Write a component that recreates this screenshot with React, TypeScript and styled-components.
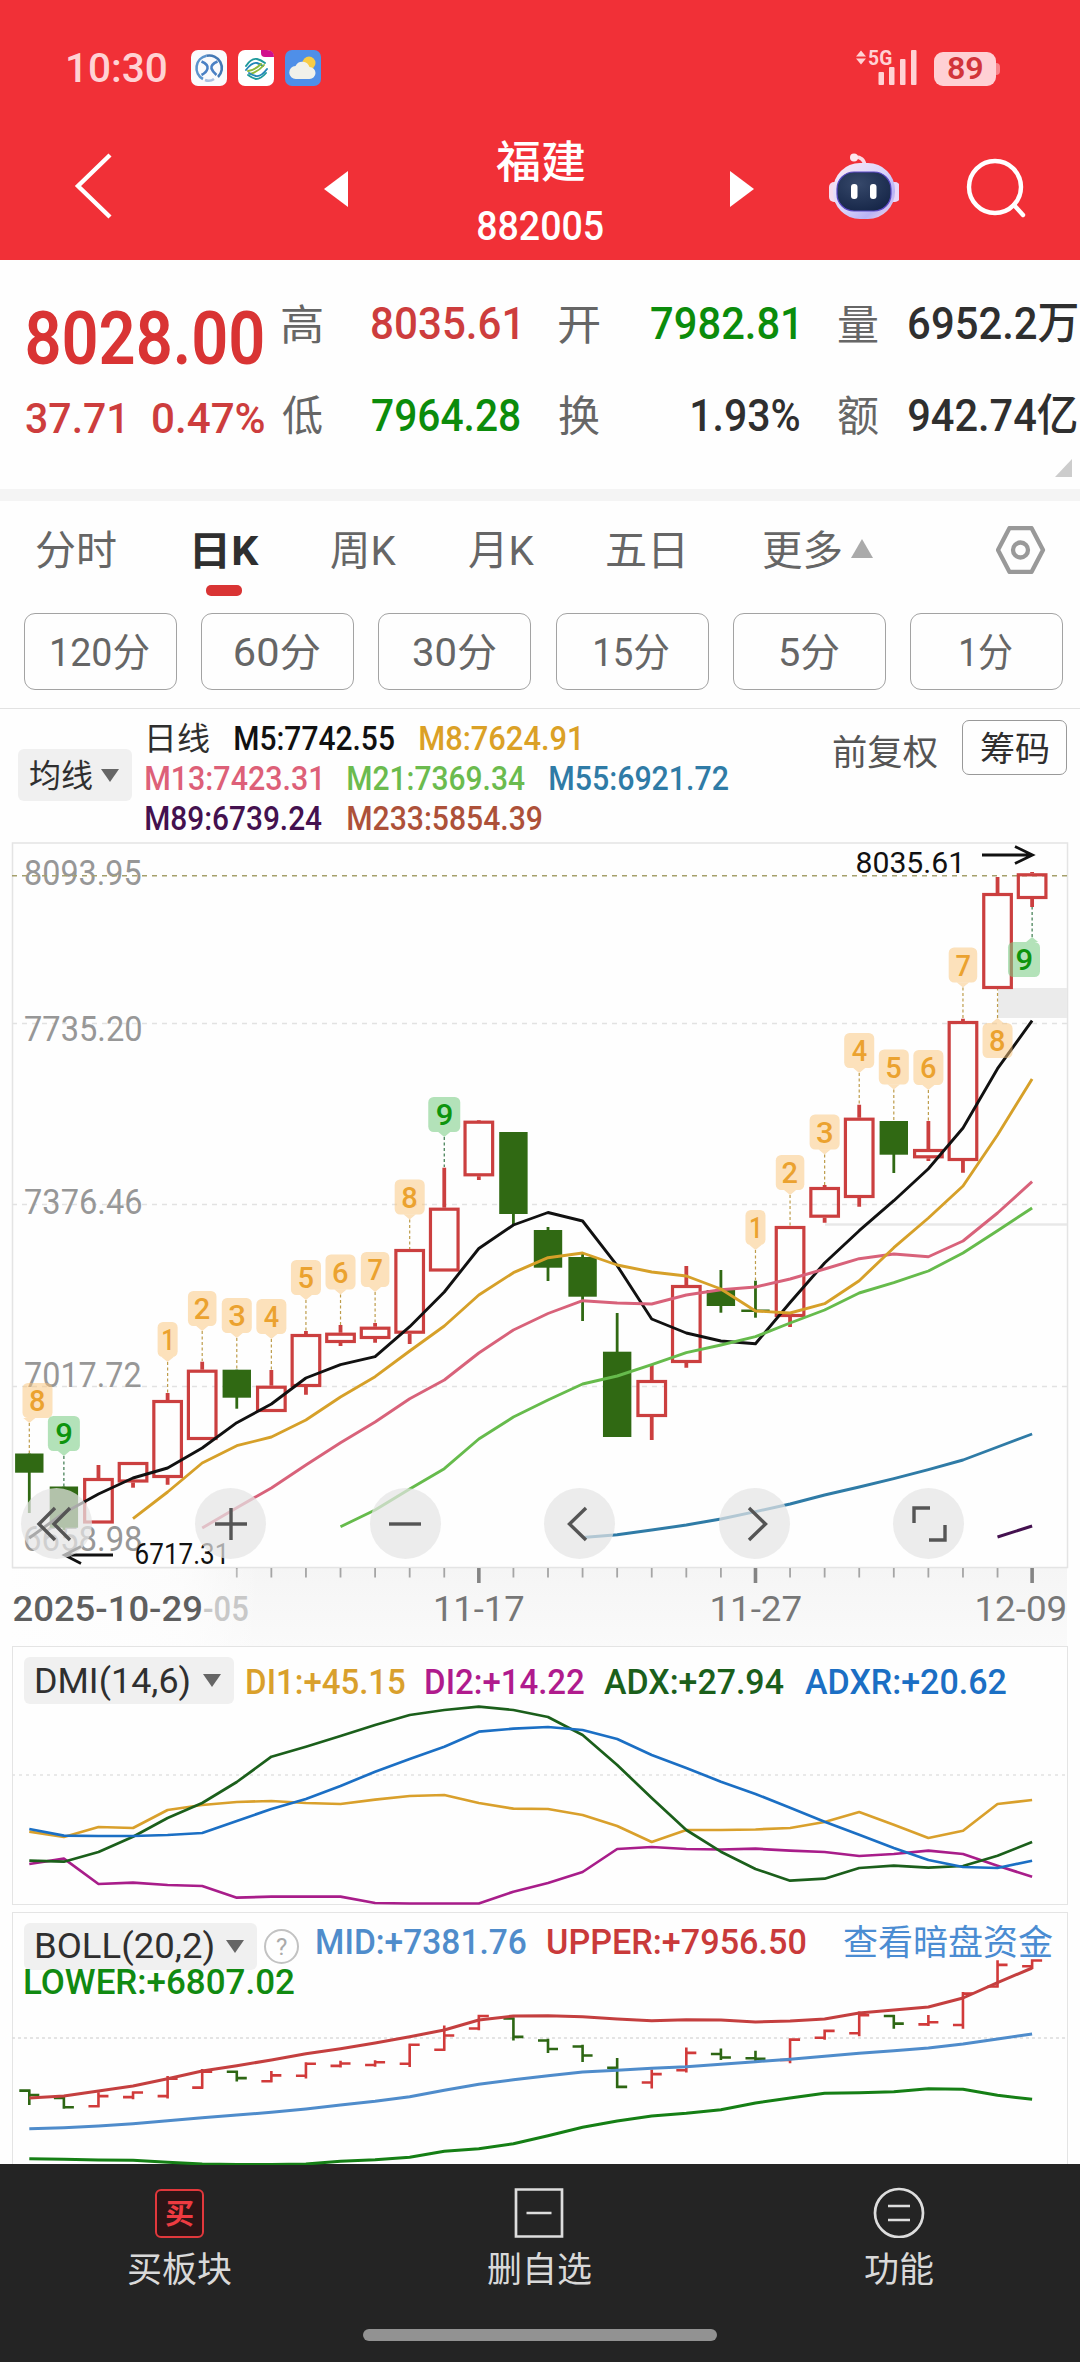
import React from "react";
import styled, { createGlobalStyle } from "styled-components";

const FAMILY = 'Roboto, "Noto Sans CJK SC", sans-serif';

const Global = createGlobalStyle`
  * { box-sizing: border-box; }
  body { margin: 0; background: #fff; font-family: ${FAMILY}; }
`;

/* ---------- text fitted to a given ink width ---------- */

let ctx: CanvasRenderingContext2D | null = null;
function fit(text: string, size: number, weight: number, width: number) {
  if (!ctx) ctx = document.createElement("canvas").getContext("2d");
  if (!ctx) return { scale: 1, shift: 0 };
  ctx.font = `${weight} ${size}px ${FAMILY}`;
  const m = ctx.measureText(text);
  const scale = width / (m.actualBoundingBoxLeft + m.actualBoundingBoxRight);
  return { scale, shift: m.actualBoundingBoxLeft * scale };
}

const FitBox = styled.span<{ $w: number; $ml: number; $size: number; $weight: number; $color: string }>`
  display: block;
  flex: none;
  width: ${(p) => p.$w}px;
  margin-left: ${(p) => p.$ml}px;
  font-size: ${(p) => p.$size}px;
  font-weight: ${(p) => p.$weight};
  line-height: 1.1;
  color: ${(p) => p.$color};
  white-space: nowrap;
`;
const FitInner = styled.span`
  display: inline-block;
  transform-origin: 0 50%;
`;

type FitProps = { w: number; size: number; color: string; weight?: number; ml?: number; children: string };
function Fit({ w, size, color, weight = 400, ml = 0, children }: FitProps) {
  const f = fit(children, size, weight, w);
  const drop = /^[\u4e00-\u9fff]+K?$/.test(children) ? 2.2 : 1.2;
  return (
    <FitBox $w={w} $ml={ml} $size={size} $weight={weight} $color={color}>
      <FitInner style={{ transform: `translate(${f.shift}px, ${drop}px) scaleX(${f.scale})` }}>{children}</FitInner>
    </FitBox>
  );
}

type ChartTextProps = { x: number; cy: number; w: number; size: number; color: string; weight?: number; children: string };
function ChartText({ x, cy, w, size, color, weight = 400, children }: ChartTextProps) {
  const f = fit(children, size, weight, w);
  return (
    <text
      transform={`translate(${x + f.shift} ${cy + size * 0.355}) scale(${f.scale} 1)`}
      fontFamily={FAMILY}
      fontSize={size}
      fontWeight={weight}
      fill={color}
    >
      {children}
    </text>
  );
}

/* ---------- header ---------- */

const Page = styled.main`
  width: 1080px;
  height: 2362px;
  display: flex;
  flex-direction: column;
  background: #fefefe;
  overflow: hidden;
`;
const Header = styled.header`
  flex: none;
  height: 260px;
  background: #f13037;
`;
const StatusBar = styled.div`
  height: 112px;
  padding: 23px 84px 0 68px;
  display: flex;
  align-items: center;
`;
const AppIcons = styled.div`
  display: flex;
  gap: 11px;
  margin-left: 25px;
`;
const Signal = styled.svg`
  margin-left: auto;
  overflow: visible;
`;
const Battery = styled.div`
  position: relative;
  width: 62px;
  height: 34px;
  margin: 2px 0 0 17px;
  border-radius: 9px;
  background: #ffd0d4;
  display: flex;
  align-items: center;
  justify-content: center;
  &::after {
    content: "";
    position: absolute;
    right: -4px;
    top: 11px;
    width: 4px;
    height: 12px;
    border-radius: 0 4px 4px 0;
    background: #f8868c;
  }
`;
const Nav = styled.nav`
  height: 148px;
  display: flex;
  align-items: center;
  & > * { flex: none; }
`;
const Back = styled.svg`margin-left: 74px;`;
const Prev = styled.svg`margin: 6px 0 0 212px;`;
const Title = styled.div`
  width: 126px;
  margin: 14px 0 0 129px;
  display: flex;
  flex-direction: column;
`;
const TitleLine = styled.div`
  height: 64.5px;
  display: flex;
  align-items: center;
  justify-content: center;
`;
const Next = styled.svg`margin: 6px 0 0 127px;`;
const Robot = styled.svg`margin-left: 75px;`;
const Search = styled.svg`margin-left: 65px;`;

function AppOne() {
  return (
    <svg width="36" height="36" viewBox="0 0 36 36">
      <rect width="36" height="36" rx="7" fill="#fafafc" />
      <g fill="none" stroke="#4a84c0" strokeWidth="2.600">
        <path d="M15.500 5.800A12.500 12.500 0 0 0 12 29" stroke="#5c93cc" />
        <path d="M15.500 5.800A12.500 12.500 0 0 1 27 27" stroke="#4478b4" />
        <path d="M14 30q5 2 9-1" stroke="#a9bfe0" />
        <path d="M10.500 11.500q7 3 6 7-1 4-6 6.500M26.500 11.500q-7 3-6 7 1 3 5 6.500" stroke="#4a80c4" />
      </g>
    </svg>
  );
}
function AppTwo() {
  return (
    <svg width="36" height="36" viewBox="0 0 36 36">
      <rect width="36" height="36" rx="7" fill="#fff" />
      <path d="M23 0h6q7 0 7 7H27q-4 0-4-4z" fill="#d1108c" />
      <g fill="none" strokeWidth="1.900" strokeLinecap="round">
        <path d="M8 16q5-8 11-7 4 1 8 4" stroke="#1f9a9c" />
        <path d="M8 20q6-8 11-7 3 1 6 3" stroke="#2386b8" />
        <path d="M12 24q8-2 14-9" stroke="#8cb93a" />
        <path d="M10 21q7-1 13-7" stroke="#8cb93a" />
        <path d="M29 19q-6 8-11 7-4-1-7-3" stroke="#2386b8" />
        <path d="M28 23q-5 6-10 6-4-1-8-4" stroke="#1f9a9c" />
      </g>
    </svg>
  );
}
function AppThree() {
  return (
    <svg width="36" height="36" viewBox="0 0 36 36">
      <rect width="36" height="36" rx="7" fill="#4f8fe8" />
      <circle cx="24" cy="13" r="6.500" fill="#f8cc45" />
      <path d="M11 29a6.500 6.500 0 0 1-.5-13 7.500 7.500 0 0 1 14 1 6 6 0 0 1 0 12z" fill="#f1f1ea" />
    </svg>
  );
}

function HeaderView() {
  return (
    <Header>
      <StatusBar>
        <Fit w={98} size={40} weight={500} color="#ffd2d4">10:30</Fit>
        <AppIcons>
          <AppOne />
          <AppTwo />
          <AppThree />
        </AppIcons>
        <Signal width="61" height="36" viewBox="856 50 61 36" fill="#ffd2d4">
          <path d="M856 56.500l5-6 5 6zM856 58.500l5 6 5-6z" />
          <ChartText x={869} cy={57.500} w={23} size={21} weight={700} color="#ffd2d4">5G</ChartText>
          <rect x="878.500" y="72" width="5.500" height="13" rx="1" />
          <rect x="889" y="67" width="5.500" height="18" rx="1" />
          <rect x="900" y="59" width="5.500" height="26" rx="1" />
          <rect x="911" y="50" width="5.500" height="35" rx="1" />
        </Signal>
        <Battery>
          <Fit w={35} size={31} weight={600} color="#d2343a">89</Fit>
        </Battery>
      </StatusBar>
      <Nav>
        <Back width="38" height="66" viewBox="0 0 38 66" fill="none" stroke="#fff" strokeWidth="4.400">
          <path d="M36 2L4 33l32 31" />
        </Back>
        <Prev width="24" height="36" viewBox="0 0 24 36" fill="#fff">
          <path d="M24 0v36L0 18z" />
        </Prev>
        <Title>
          <TitleLine><Fit w={89} size={44} weight={500} color="#fff">福建</Fit></TitleLine>
          <TitleLine><Fit w={125} size={41} color="#fff" weight={500}>882005</Fit></TitleLine>
        </Title>
        <Next width="24" height="36" viewBox="0 0 24 36" fill="#fff">
          <path d="M0 0v36l24-18z" />
        </Next>
        <Robot width="70" height="66" viewBox="0 0 70 66">
          <defs>
            <linearGradient id="shell" x1="0" y1="0" x2="1" y2="1">
              <stop offset="0" stopColor="#fdeaf4" />
              <stop offset=".5" stopColor="#d9d5fb" />
              <stop offset=".75" stopColor="#b9b3f6" />
              <stop offset="1" stopColor="#fbdfe8" />
            </linearGradient>
            <radialGradient id="visor" cx=".4" cy=".3" r=".8">
              <stop offset="0" stopColor="#36486a" />
              <stop offset="1" stopColor="#142446" />
            </radialGradient>
          </defs>
          <path d="M25 4q10-1 11 9" fill="none" stroke="#fcd9e4" strokeWidth="3.500" />
          <circle cx="25" cy="4.500" r="4" fill="#fde6ee" />
          <rect x="0" y="29" width="12" height="20" rx="5" fill="#f6dcee" />
          <rect x="59" y="29" width="12" height="20" rx="5" fill="#e8d8f8" />
          <rect x="4" y="10" width="62" height="56" rx="27" fill="url(#shell)" />
          <rect x="8" y="19" width="54" height="39" rx="17" fill="url(#visor)" stroke="#5b49c6" strokeWidth="1.200" />
          <rect x="22" y="31" width="6.500" height="15" rx="3" fill="#fff" />
          <rect x="41" y="31" width="6.500" height="15" rx="3" fill="#fff" />
        </Robot>
        <Search width="64" height="64" viewBox="0 0 64 64" fill="none" stroke="#fff" strokeWidth="4.400" strokeLinecap="round">
          <circle cx="31" cy="33" r="26" />
          <path d="M50 51l9 10" />
        </Search>
      </Nav>
    </Header>
  );
}

/* ---------- quote ---------- */

const RED = "#d93434";
const GREEN = "#0b8c0b";
const INK = "#2f2f2f";
const MUTED = "#666";

const Quote = styled.section`
  position: relative;
  flex: none;
  height: 229px;
  padding: 18px 0 0 26px;
  display: flex;
`;
const PriceCol = styled.div`width: 238px;`;
const PairCol = styled.div<{ $w: number; $ml: number }>`
  flex: none;
  width: ${(p) => p.$w}px;
  margin-left: ${(p) => p.$ml}px;
`;
const Line = styled.div<{ $h: number }>`
  height: ${(p) => p.$h}px;
  display: flex;
  align-items: center;
`;
const Corner = styled.svg`
  position: absolute;
  right: 8px;
  bottom: 12px;
`;
const Divider = styled.div`
  flex: none;
  height: 12px;
  background: #f4f4f4;
`;

type PairData = { label: string; value: string; gap: number; w: number; color: string };
const PAIRS: { w: number; ml: number; rows: PairData[] }[] = [
  { w: 239, ml: 18, rows: [
    { label: "高", value: "8035.61", gap: 50, w: 145.5, color: "#cd3d3d" },
    { label: "低", value: "7964.28", gap: 50, w: 148, color: GREEN } ] },
  { w: 239, ml: 38, rows: [
    { label: "开", value: "7982.81", gap: 52, w: 145, color: GREEN },
    { label: "换", value: "1.93%", gap: 93, w: 107, color: INK } ] },
  { w: 240, ml: 40, rows: [
    { label: "量", value: "6952.2万", gap: 31, w: 168, color: INK },
    { label: "额", value: "942.74亿", gap: 31, w: 168, color: INK } ] },
];

function QuoteView() {
  return (
    <Quote>
      <PriceCol>
        <Line $h={118}><Fit w={236} ml={1} size={75} weight={600} color={RED}>8028.00</Fit></Line>
        <Line $h={43}>
          <Fit w={96.5} size={43} weight={500} color="#cd3d3d">37.71</Fit>
          <Fit w={111} ml={30.5} size={43} weight={500} color="#cd3d3d">0.47%</Fit>
        </Line>
      </PriceCol>
      {PAIRS.map((c, i) => (
        <PairCol key={i} $w={c.w} $ml={c.ml}>
          {c.rows.map((r) => (
            <Line key={r.label} $h={91.5}>
              <Fit w={40} size={42} color={MUTED}>{r.label}</Fit>
              <Fit w={r.w} ml={r.gap} size={44.5} weight={500} color={r.color}>{r.value}</Fit>
            </Line>
          ))}
        </PairCol>
      ))}
      <Corner width="17" height="18" viewBox="0 0 17 18"><path d="M17 0v18H0z" fill="#ccc" /></Corner>
    </Quote>
  );
}

/* ---------- period tabs ---------- */

const Tabs = styled.div`
  flex: none;
  height: 112px;
  display: flex;
  padding-top: 24px;
`;
const Tab = styled.div<{ $ml: number }>`
  position: relative;
  flex: none;
  height: 50px;
  margin-left: ${(p) => p.$ml}px;
  display: flex;
  align-items: center;
`;
const Underline = styled.i`
  position: absolute;
  left: 11px;
  top: 60px;
  width: 36px;
  height: 11px;
  border-radius: 5px;
  background: ${RED};
`;
const UpArrow = styled.svg`margin: -4px 0 0 10px;`;
const Minutes = styled.div`
  flex: none;
  height: 96px;
  padding: 0 17px 0 24px;
  display: grid;
  grid-template-columns: repeat(6, 153px);
  justify-content: space-between;
  align-items: start;
  border-bottom: 1px solid #e2e2e2;
`;
const MinuteButton = styled.div`
  height: 77px;
  padding-top: 2px;
  border: 1.5px solid #a3a3a3;
  border-radius: 11px;
  display: flex;
  align-items: center;
  justify-content: center;
`;

const MINUTES: [string, number][] = [["120分", 97], ["60分", 85], ["30分", 83], ["15分", 74], ["5分", 59], ["1分", 51]];

function PeriodView() {
  return (
    <>
      <Tabs>
        <Tab $ml={36}><Fit w={80} size={41} color={MUTED}>分时</Fit></Tab>
        <Tab $ml={79}><Fit w={64} size={40} weight={700} color={INK}>日K</Fit><Underline /></Tab>
        <Tab $ml={72}><Fit w={65} size={41} color={MUTED}>周K</Fit></Tab>
        <Tab $ml={73}><Fit w={65} size={41} color={MUTED}>月K</Fit></Tab>
        <Tab $ml={73}><Fit w={76} size={41} color={MUTED}>五日</Fit></Tab>
        <Tab $ml={80}>
          <Fit w={78} size={41} color={MUTED}>更多</Fit>
          <UpArrow width="22" height="19" viewBox="0 0 22 19"><path d="M11 0l11 19H0z" fill="#aaa" /></UpArrow>
        </Tab>
        <Tab $ml={123}>
          <svg width="50" height="48" viewBox="0 0 50 48" fill="none" stroke="#999" strokeWidth="4.300" strokeLinejoin="round">
            <path d="M13.500 2h22l11.500 22-11.500 22h-22L2 24z" />
            <circle cx="24.500" cy="24" r="7.500" />
          </svg>
        </Tab>
      </Tabs>
      <Minutes>
        {MINUTES.map(([t, w]) => (
          <MinuteButton key={t}><Fit w={w} size={39} color={MUTED}>{t}</Fit></MinuteButton>
        ))}
      </Minutes>
    </>
  );
}

/* ---------- moving average legend ---------- */

const Legend = styled.section`
  flex: none;
  height: 133px;
  padding: 9px 13px 0 18px;
  display: flex;
`;
const Picker = styled.div<{ $w: number; $h: number; $mt?: number }>`
  flex: none;
  width: ${(p) => p.$w}px;
  height: ${(p) => p.$h}px;
  margin-top: ${(p) => p.$mt || 0}px;
  padding: 0 13px 0 12px;
  border-radius: 6px;
  background: #f0f0f0;
  display: flex;
  align-items: center;
  justify-content: space-between;
`;
const Rows = styled.div`
  margin-left: 14px;
  width: 600px;
`;
const Adjust = styled.div`
  margin-left: auto;
  display: flex;
  align-items: flex-start;
`;
const AdjustText = styled.div`padding-top: 15px;`;
const Chips = styled.div`
  height: 55px;
  width: 105px;
  margin: 2px 0 0 25px;
  border: 1.5px solid #999;
  border-radius: 7px;
  display: flex;
  align-items: center;
  justify-content: center;
`;

function Down() {
  return <svg width="18" height="13" viewBox="0 0 18 13"><path d="M0 0h18l-9 13z" fill="#666" /></svg>;
}

const C = {
  m5: "#111", m8: "#dba126", m13: "#dd6078", m21: "#6bbb4e", m55: "#2f7ba6", m89: "#44114f", m233: "#ad5139",
};

function LegendView() {
  return (
    <Legend>
      <Picker $w={114} $h={52} $mt={31}>
        <Fit w={62} size={32} color={INK}>均线</Fit>
        <Down />
      </Picker>
      <Rows>
        <Line $h={40}>
          <Fit w={60} ml={3} size={32} color={INK}>日线</Fit>
          <Fit w={159} ml={26} size={33.5} weight={500} color={C.m5}>M5:7742.55</Fit>
          <Fit w={159} ml={26} size={33.5} weight={500} color={C.m8}>M8:7624.91</Fit>
        </Line>
        <Line $h={40.5}>
          <Fit w={174} size={33.5} weight={500} color={C.m13}>M13:7423.31</Fit>
          <Fit w={177} ml={28} size={33.5} weight={500} color={C.m21}>M21:7369.34</Fit>
          <Fit w={178} ml={25} size={33.5} weight={500} color={C.m55}>M55:6921.72</Fit>
        </Line>
        <Line $h={40.5}>
          <Fit w={176} size={33.5} weight={500} color={C.m89}>M89:6739.24</Fit>
          <Fit w={194} ml={26} size={33.5} weight={500} color={C.m233}>M233:5854.39</Fit>
        </Line>
      </Rows>
      <Adjust>
        <AdjustText><Fit w={104} size={35} color="#555">前复权</Fit></AdjustText>
        <Chips><Fit w={67} size={34} color={INK}>筹码</Fit></Chips>
      </Adjust>
    </Legend>
  );
}

/* ---------- candle chart ---------- */

const X0 = 29.3;
const STEP = 34.58;
const px = (i: number) => X0 + i * STEP;
const points = (ys: number[], start = 0) => ys.map((y, k) => `${px(start + k).toFixed(1)},${y}`).join(" ");

// [up, body top, body bottom, high, low]
type Candle = [number, number, number, number, number];
const CANDLES: Candle[] = [
  [0, 1453.5, 1472.7, 1453.5, 1513], [0, 1486.5, 1527.7, 1486.5, 1530], [1, 1478, 1523.5, 1465, 1523.5],
  [1, 1462, 1482.5, 1462, 1487.7], [1, 1400, 1478, 1393, 1484.7], [1, 1369.7, 1440, 1361.7, 1440],
  [0, 1369.7, 1397.7, 1369.7, 1408.7], [1, 1385.7, 1412, 1370, 1412], [1, 1334, 1387, 1331, 1394.7],
  [1, 1332.7, 1343, 1325, 1346], [1, 1326.7, 1339, 1323, 1342.7], [1, 1249, 1333.7, 1249, 1344],
  [1, 1207.7, 1271.5, 1167.7, 1271.5], [1, 1120.7, 1176.3, 1120, 1180], [0, 1132, 1214, 1132, 1226],
  [0, 1230, 1267.7, 1227, 1281], [0, 1257, 1296.7, 1253, 1321], [0, 1351.7, 1437, 1313, 1437],
  [1, 1380, 1417, 1364, 1440], [1, 1285, 1363, 1266, 1367.7], [0, 1290, 1306, 1270, 1312.7],
  [0, 1309.5, 1312, 1280.7, 1317.7], [1, 1226, 1317, 1226, 1327], [1, 1187, 1217.7, 1185, 1222.7],
  [1, 1117.7, 1198, 1104.7, 1206.7], [0, 1121, 1154.7, 1121, 1173], [1, 1149, 1158.3, 1121, 1161],
  [1, 1021, 1161, 1018.7, 1172.7], [1, 893, 989, 877, 989], [1, 873.3, 899, 872, 907],
];

const MA5 = [1538, 1513, 1494, 1478, 1468, 1448, 1422.7, 1404, 1378, 1364.7, 1356.7, 1326.7, 1292, 1248.5, 1225, 1212.5, 1221, 1265.7, 1319, 1333, 1341, 1343.7, 1302.5, 1263, 1230.7, 1200.7, 1168.7, 1128, 1068.7, 1020.7];
const MA8 = [1518.7, 1492, 1463, 1445.7, 1437, 1420, 1397, 1376.7, 1351, 1326, 1295, 1272.7, 1257.7, 1253, 1265, 1272, 1276, 1289, 1311, 1313, 1303.7, 1280.7, 1247.7, 1218, 1186, 1135, 1079];
const MA13 = [1528, 1507.7, 1488, 1465, 1442.7, 1422, 1398.7, 1380, 1353, 1330, 1313.5, 1300.7, 1303, 1304, 1295, 1289.7, 1287, 1279, 1269, 1258.7, 1254, 1256.7, 1241, 1213, 1181.7];
const MA21 = [1526.7, 1510, 1489, 1468.7, 1439, 1417, 1400, 1384, 1376, 1364.7, 1352.7, 1345, 1336.7, 1323, 1310, 1293, 1282.7, 1271, 1253, 1230.7, 1208];
const MA55 = [1537.5, 1534.7, 1530, 1525, 1519, 1511.7, 1504, 1495, 1487, 1478.7, 1469.7, 1460, 1447, 1434];
const MA89 = [1537, 1526];

// index, digit, box top, box centre x, leader end; "below" marks hang under the candle
type Mark = { i: number; n: string; top: number; cx: number; to: number; green?: boolean; below?: boolean };
const mark = (i: number, n: string, top: number, to: number, rest: Partial<Mark> = {}): Mark => ({ i, n, top, to, cx: px(i), ...rest });
const MARKS: Mark[] = [
  mark(0, "8", 1383, 1453, { cx: 37.5 }), mark(1, "9", 1416, 1486, { green: true }), mark(4, "1", 1322, 1393),
  mark(5, "2", 1291, 1361), mark(6, "3", 1298, 1369), mark(7, "4", 1299, 1370), mark(8, "5", 1260, 1331),
  mark(9, "6", 1254.5, 1325), mark(10, "7", 1252, 1323), mark(11, "8", 1179.5, 1249), mark(12, "9", 1097, 1167, { green: true }),
  mark(21, "1", 1210, 1280), mark(22, "2", 1155, 1226), mark(23, "3", 1114.5, 1185), mark(24, "4", 1033, 1104),
  mark(25, "5", 1049.5, 1121), mark(26, "6", 1050, 1121), mark(27, "7", 947.5, 1018),
  mark(28, "8", 1023, 989, { below: true }), mark(29, "9", 942, 907, { below: true, green: true, cx: 1024 }),
];

const UP = "#cb3f3f";
const DOWN = "#306913";

function CandleShape({ c, i }: { c: Candle; i: number }) {
  const [up, top, bottom, high, low] = c;
  const x = px(i);
  if (up) {
    return (
      <g stroke={UP} fill="none">
        <path d={`M${x} ${high}V${top}M${x} ${bottom}V${low}`} strokeWidth="3.800" />
        <rect x={x - 13.8} y={top + 1.5} width="27.600" height={bottom - top - 3} strokeWidth="3.200" />
      </g>
    );
  }
  return (
    <g fill={DOWN}>
      <rect x={x - 1.4} y={high} width="2.800" height={low - high} />
      <rect x={x - 14.2} y={top} width="28.400" height={bottom - top} />
    </g>
  );
}

function MarkShape({ m }: { m: Mark }) {
  const x = px(m.i);
  const w = m.n === "1" ? 20 : m.n === "2" || m.n === "7" ? 28.5 : m.green ? 32 : 30;
  const fill = m.green ? "rgba(124,205,134,.58)" : "rgba(250,195,120,.5)";
  const tip = m.below
    ? `M${x - 6} ${m.top}l6-5l6 5z`
    : `M${x - 6} ${m.top + 35}l6 5l6-5z`;
  const from = m.below ? m.top - 5 : m.top + 40;
  const glyph = m.n === "1" ? 7.5 : 15;
  return (
    <g>
      <path d={`M${x} ${from}V${m.to}`} stroke={m.green ? "#3c7a4e" : "#bd9c4a"} strokeWidth="1.200" strokeDasharray="3 2.500" />
      <rect x={m.cx - w / 2} y={m.top} width={w} height="35" rx="5.500" fill={fill} />
      <path d={tip} fill={fill} />
      <ChartText x={m.cx - glyph / 2 + (m.n === "1" ? -1 : 0)} cy={m.top + 18} w={glyph} size={29} weight={500} color={m.green ? "#0d940d" : "#eba22f"}>
        {m.n}
      </ChartText>
    </g>
  );
}

const ChartArea = styled.section`
  position: relative;
  flex: none;
  height: 804px;
`;
const Canvas = styled.svg`display: block;`;
const Controls = styled.div`
  position: absolute;
  left: 20.5px;
  top: 646px;
  display: flex;
  gap: 103.500px;
`;
const Round = styled.button`
  width: 71px;
  height: 71px;
  padding: 0;
  border: 0;
  border-radius: 50%;
  background: rgba(229, 229, 229, 0.72);
  display: flex;
  align-items: center;
  justify-content: center;
`;

const CONTROL_PATHS = [
  "M34 4L18 20l16 16M19 4L3 20l16 16",
  "M20 4v32M4 20h32",
  "M4 20h32",
  "M26 4L9.500 20l16.500 16",
  "M15 4l16.500 16-16.500 16",
  "M5 19V4h16M36 21v15H20",
];

const Y_LABELS: [string, number][] = [["8093.95", 873], ["7735.20", 1029], ["7376.46", 1201.5], ["7017.72", 1374.5], ["6658.98", 1539]];

function ChartView() {
  return (
    <ChartArea>
      <Canvas width="1080" height="804" viewBox="0 842 1080 804">
        <defs>
          <linearGradient id="axis" x1="0" y1="0" x2="0" y2="1">
            <stop offset="0" stopColor="#f5f5f5" />
            <stop offset="1" stopColor="#fafafa" />
          </linearGradient>
          <linearGradient id="fade" x1="0" y1="0" x2="1" y2="0">
            <stop offset="0" stopColor="#fefefe" />
            <stop offset=".7" stopColor="#fefefe" stopOpacity=".75" />
            <stop offset="1" stopColor="#fefefe" stopOpacity="0" />
          </linearGradient>
        </defs>
        <rect x="12" y="1568" width="1055" height="78" fill="url(#axis)" />
        <rect x="12.500" y="843" width="1055" height="724.500" fill="none" stroke="#e4e4e4" strokeWidth="1.500" />
        <path d="M12 1023.500H1067M12 1204.500H1067M12 1386.500H1067" stroke="#e2e2e2" strokeWidth="1.500" strokeDasharray="5 5" />
        <rect x="998" y="988" width="69" height="30" fill="#ebebeb" />
        <path d="M825 1224.500H1067" stroke="#e8e8e8" strokeWidth="2.500" />
        {Y_LABELS.map(([t, cy]) => (
          <ChartText key={t} x={25} cy={cy} w={116} size={35} weight={450} color="#979797">{t}</ChartText>
        ))}
        <path d="M12 875.700H1072" stroke="#a5a06c" strokeWidth="1.500" strokeDasharray="5 5" />
        {CANDLES.map((c, i) => <CandleShape key={i} c={c} i={i} />)}
        <g fill="none" strokeWidth="2.900" strokeLinejoin="round">
          <polyline points={points(MA5)} stroke={C.m5} />
          <polyline points={points(MA13, 5)} stroke="#d8627a" />
          <polyline points={points(MA21, 9)} stroke="#66bb4c" />
          <polyline points={points(MA8, 3)} stroke="#d6a029" />
          <polyline points={points(MA55, 16)} stroke="#2f7ba6" />
          <polyline points={points(MA89, 28)} stroke="#44114f" />
        </g>
        {MARKS.map((m) => <MarkShape key={m.i} m={m} />)}
        <ChartText x={856.5} cy={862.5} w={103} size={29.5} color="#111">8035.61</ChartText>
        <ChartText x={135.500} cy={1554} w={89} size={29.5} color="#111">6717.31</ChartText>
        <g fill="none" stroke="#111" strokeWidth="2.800">
          <path d="M982 855h50M1015 846.500l17.500 8.500-17.500 8.500" />
          <path d="M113 1555H66M81 1546.500L64.500 1555l16.500 8.500" />
        </g>
        {Array.from({ length: 24 }, (_, k) => k + 6).map((i) => {
          const major = i === 13 || i === 21 || i === 29;
          return <path key={i} d={`M${px(i)} 1568V${major ? 1583 : 1577.5}`} stroke={major ? "#848484" : "#a5a5a5"} strokeWidth={major ? 3.6 : 1.8} />;
        })}
        <rect x="0" y="1569" width="260" height="77" fill="url(#fade)" />
        <ChartText x={13.5} cy={1608.5} w={187.5} size={35} weight={500} color="#5f5f5f">2025-10-29</ChartText>
        <ChartText x={204} cy={1608.5} w={44} size={35} weight={500} color="#c8c8c8">-05</ChartText>
        <ChartText x={435} cy={1608.5} w={89} size={35} weight={450} color="#777">11-17</ChartText>
        <ChartText x={711.5} cy={1608.5} w={90} size={35} weight={450} color="#777">11-27</ChartText>
        <ChartText x={976.5} cy={1608.5} w={89} size={35} weight={450} color="#777">12-09</ChartText>
      </Canvas>
      <Controls>
        {CONTROL_PATHS.map((d) => (
          <Round key={d}>
            <svg width="40" height="40" viewBox="0 0 40 40" fill="none" stroke="#555" strokeWidth="3.400"><path d={d} /></svg>
          </Round>
        ))}
      </Controls>
    </ChartArea>
  );
}

/* ---------- indicator panels ---------- */

const Panel = styled.section<{ $h: number; $mb?: number; $open?: boolean }>`
  position: relative;
  flex: none;
  height: ${(p) => p.$h}px;
  margin: 0 12px ${(p) => p.$mb || 0}px;
  border: 1.5px solid #e4e4e4;
  ${(p) => p.$open && "border-bottom: 0;"}
`;
const PanelPlot = styled.svg`
  position: absolute;
  left: -13px;
  top: -1px;
`;
const PanelHead = styled.div<{ $pt: number }>`
  position: relative;
  padding: ${(p) => p.$pt}px 0 0 11px;
  display: flex;
  align-items: flex-start;
`;
const HeadText = styled.div<{ $h: number }>`
  height: ${(p) => p.$h}px;
  display: flex;
  align-items: center;
`;
const LowerRow = styled.div`
  position: relative;
  height: 30px;
  margin-top: -2px;
  padding-left: 12px;
  display: flex;
  align-items: center;
`;
const Help = styled.div`
  flex: none;
  width: 35px;
  height: 35px;
  margin: 6px 0 0 7px;
  border: 2px solid #c2c2c2;
  border-radius: 50%;
  display: flex;
  align-items: center;
  justify-content: center;
`;

const DI1 = [1831.7, 1837, 1827, 1828, 1810, 1805, 1802, 1801, 1803, 1804, 1799.7, 1796, 1795, 1803, 1808.7, 1809, 1815, 1826, 1842, 1830, 1830, 1829.5, 1828, 1822, 1812, 1824.7, 1838, 1830.7, 1804, 1800];
const DI2 = [1864, 1858.7, 1884, 1882.7, 1885, 1886, 1897.7, 1896.7, 1896.7, 1896.7, 1903, 1903.5, 1903.5, 1903.5, 1891.7, 1883, 1872, 1849, 1847, 1849, 1849.5, 1848.7, 1850.7, 1852, 1856, 1854, 1850.7, 1854, 1865.7, 1876.7];
const ADX = [1860.7, 1861.7, 1852, 1836.7, 1818, 1803, 1782, 1756.7, 1746.7, 1736, 1725, 1715, 1710, 1706.7, 1710, 1717, 1735, 1765, 1798, 1830, 1851.7, 1869, 1880.7, 1878.7, 1868, 1865.7, 1867.7, 1866, 1855.7, 1842];
const ADXR = [1829, 1835.7, 1836, 1836, 1835, 1833, 1821, 1809, 1799, 1786, 1771.7, 1759, 1746.7, 1731.7, 1728.7, 1727, 1730, 1739, 1755, 1768, 1781.7, 1794, 1807.7, 1821.7, 1834.7, 1848, 1860, 1867, 1868, 1860.7];
const UPPER = [2097, 2095, 2090, 2085, 2077.7, 2070, 2064.7, 2059, 2052.7, 2047.7, 2042, 2035.7, 2029, 2019, 2015, 2014.7, 2015.7, 2018, 2019.7, 2018.7, 2019, 2021, 2020, 2018, 2012, 2009, 2006, 1997, 1981.7, 1967];
const MID = [2127.7, 2126.7, 2125, 2122.7, 2119.7, 2116.7, 2114, 2111.3, 2108, 2104, 2100.3, 2095.7, 2089.3, 2083.3, 2078.7, 2074.7, 2071, 2069.3, 2067.3, 2065.7, 2063.3, 2060.7, 2058.3, 2055.3, 2052.3, 2049.7, 2047, 2043, 2038, 2033];
const LOWER = [2157.7, 2158.3, 2159, 2159.3, 2161.3, 2163, 2163.5, 2163.5, 2163, 2160.3, 2158.7, 2156.3, 2150.3, 2147.7, 2142.7, 2134.7, 2126.3, 2120, 2115, 2112.3, 2108.7, 2102, 2097, 2092.3, 2091.7, 2090.7, 2087.7, 2088.3, 2094.3, 2098.3];

const barY = (y: number) => y * 0.2243 + 1763.6;

function DmiView() {
  return (
    <Panel $h={258.5} $mb={7}>
      <PanelPlot width="1080" height="260" viewBox="0 1646 1080 260" fill="none" strokeWidth="2.700" strokeLinejoin="round">
        <path d="M12 1775H1067" stroke="#e2e2e2" strokeWidth="1.500" strokeDasharray="3 4" />
        <polyline points={points(DI1)} stroke="#d9a02c" />
        <polyline points={points(DI2)} stroke="#a81d8a" />
        <polyline points={points(ADX)} stroke="#1b5f1b" />
        <polyline points={points(ADXR)} stroke="#1b6fc4" />
      </PanelPlot>
      <PanelHead $pt={10}>
        <Picker $w={210} $h={47}>
          <Fit w={153} size={34.5} color={INK} weight={450}>DMI(14,6)</Fit>
          <Down />
        </Picker>
        <HeadText $h={50}>
          <Fit w={158} ml={13} size={35} weight={500} color="#d9a02c">DI1:+45.15</Fit>
          <Fit w={158} ml={21} size={35} weight={500} color="#b01b8d">DI2:+14.22</Fit>
          <Fit w={180} ml={20} size={35} weight={500} color="#1b5f1b">ADX:+27.94</Fit>
          <Fit w={201} ml={21} size={35} weight={500} color="#1b6fc4">ADXR:+20.62</Fit>
        </HeadText>
      </PanelHead>
    </Panel>
  );
}

function BollView() {
  return (
    <Panel $h={252.5} $open>
      <PanelPlot width="1080" height="253" viewBox="0 1911 1080 253" fill="none" strokeWidth="3" strokeLinejoin="round">
        <path d="M12 2037H1067" stroke="#dcdcdc" strokeWidth="1.500" strokeDasharray="3 3" />
        <polyline points={points(LOWER)} stroke="#157f15" />
        {CANDLES.map(([up, top, bottom, high, low], i) => {
          const open = barY(up ? bottom : top);
          const close = barY(up ? top : bottom);
          return (
            <path
              key={i}
              d={`M${px(i) - 10} ${open}H${px(i) + 1}M${px(i)} ${barY(high) - 1}V${barY(low) + 1}M${px(i) - 1} ${close}H${px(i) + 10}`}
              stroke={up ? "#d13a3a" : "#2d6613"}
              strokeWidth="2.600"
            />
          );
        })}
        <polyline points={points(UPPER)} stroke="#c43f3f" />
        <polyline points={points(MID)} stroke="#4f8ccb" />
      </PanelPlot>
      <PanelHead $pt={10}>
        <Picker $w={233} $h={47}>
          <Fit w={177} size={34.5} color={INK} weight={450}>BOLL(20,2)</Fit>
          <Down />
        </Picker>
        <Help><Fit w={11} size={24} color="#aaa">?</Fit></Help>
        <HeadText $h={39}>
          <Fit w={209} ml={18} size={35} weight={500} color="#4f8ccb">MID:+7381.76</Fit>
          <Fit w={258} ml={22} size={35} weight={500} color="#c93a3a">UPPER:+7956.50</Fit>
          <Fit w={209} ml={38} size={35} color="#4a8cd2">查看暗盘资金</Fit>
        </HeadText>
      </PanelHead>
      <LowerRow><Fit w={269} size={35} weight={500} color="#118a11">LOWER:+6807.02</Fit></LowerRow>
    </Panel>
  );
}

/* ---------- bottom bar ---------- */

const Bottom = styled.footer`
  flex: none;
  height: 198px;
  background: #242424;
  display: flex;
  flex-direction: column;
  align-items: center;
`;
const Actions = styled.div`
  width: 100%;
  height: 165px;
  display: grid;
  grid-template-columns: repeat(3, 1fr);
`;
const Action = styled.div`
  padding-top: 22px;
  padding-right: 2px;
  display: flex;
  flex-direction: column;
  align-items: center;
  gap: 8px;
`;
const ActionLabel = styled.div`
  height: 46px;
  display: flex;
  align-items: center;
`;
const BuyIcon = styled.div`
  width: 49px;
  height: 49px;
  margin: 3px 0 0;
  border: 2.500px solid #e2383c;
  border-radius: 6px;
  background: #2b1516;
  display: flex;
  align-items: center;
  justify-content: center;
`;
const HomeBar = styled.div`
  width: 354px;
  height: 12px;
  border-radius: 6px;
  background: #929292;
`;

function BottomView() {
  return (
    <Bottom>
      <Actions>
        <Action>
          <BuyIcon><Fit w={27} size={28} weight={700} color="#ee3b41">买</Fit></BuyIcon>
          <ActionLabel><Fit w={103} size={35} color="#d9d9d9">买板块</Fit></ActionLabel>
        </Action>
        <Action>
          <svg width="52" height="52" viewBox="0 0 52 52" fill="none" stroke="#ddd" strokeWidth="2.700">
            <path d="M3 3.500h46v47H3zM13.500 27h25" />
          </svg>
          <ActionLabel><Fit w={103} size={35} color="#d9d9d9">删自选</Fit></ActionLabel>
        </Action>
        <Action>
          <svg width="52" height="52" viewBox="0 0 52 52" fill="none" stroke="#ddd" strokeWidth="2.700">
            <circle cx="26" cy="27" r="24" />
            <path d="M15 20h22M15 34h22" />
          </svg>
          <ActionLabel><Fit w={68} size={35} color="#d9d9d9">功能</Fit></ActionLabel>
        </Action>
      </Actions>
      <HomeBar />
    </Bottom>
  );
}

export default function App() {
  return (
    <>
      <Global />
      <Page>
        <HeaderView />
        <QuoteView />
        <Divider />
        <PeriodView />
        <LegendView />
        <ChartView />
        <DmiView />
        <BollView />
        <BottomView />
      </Page>
    </>
  );
}
